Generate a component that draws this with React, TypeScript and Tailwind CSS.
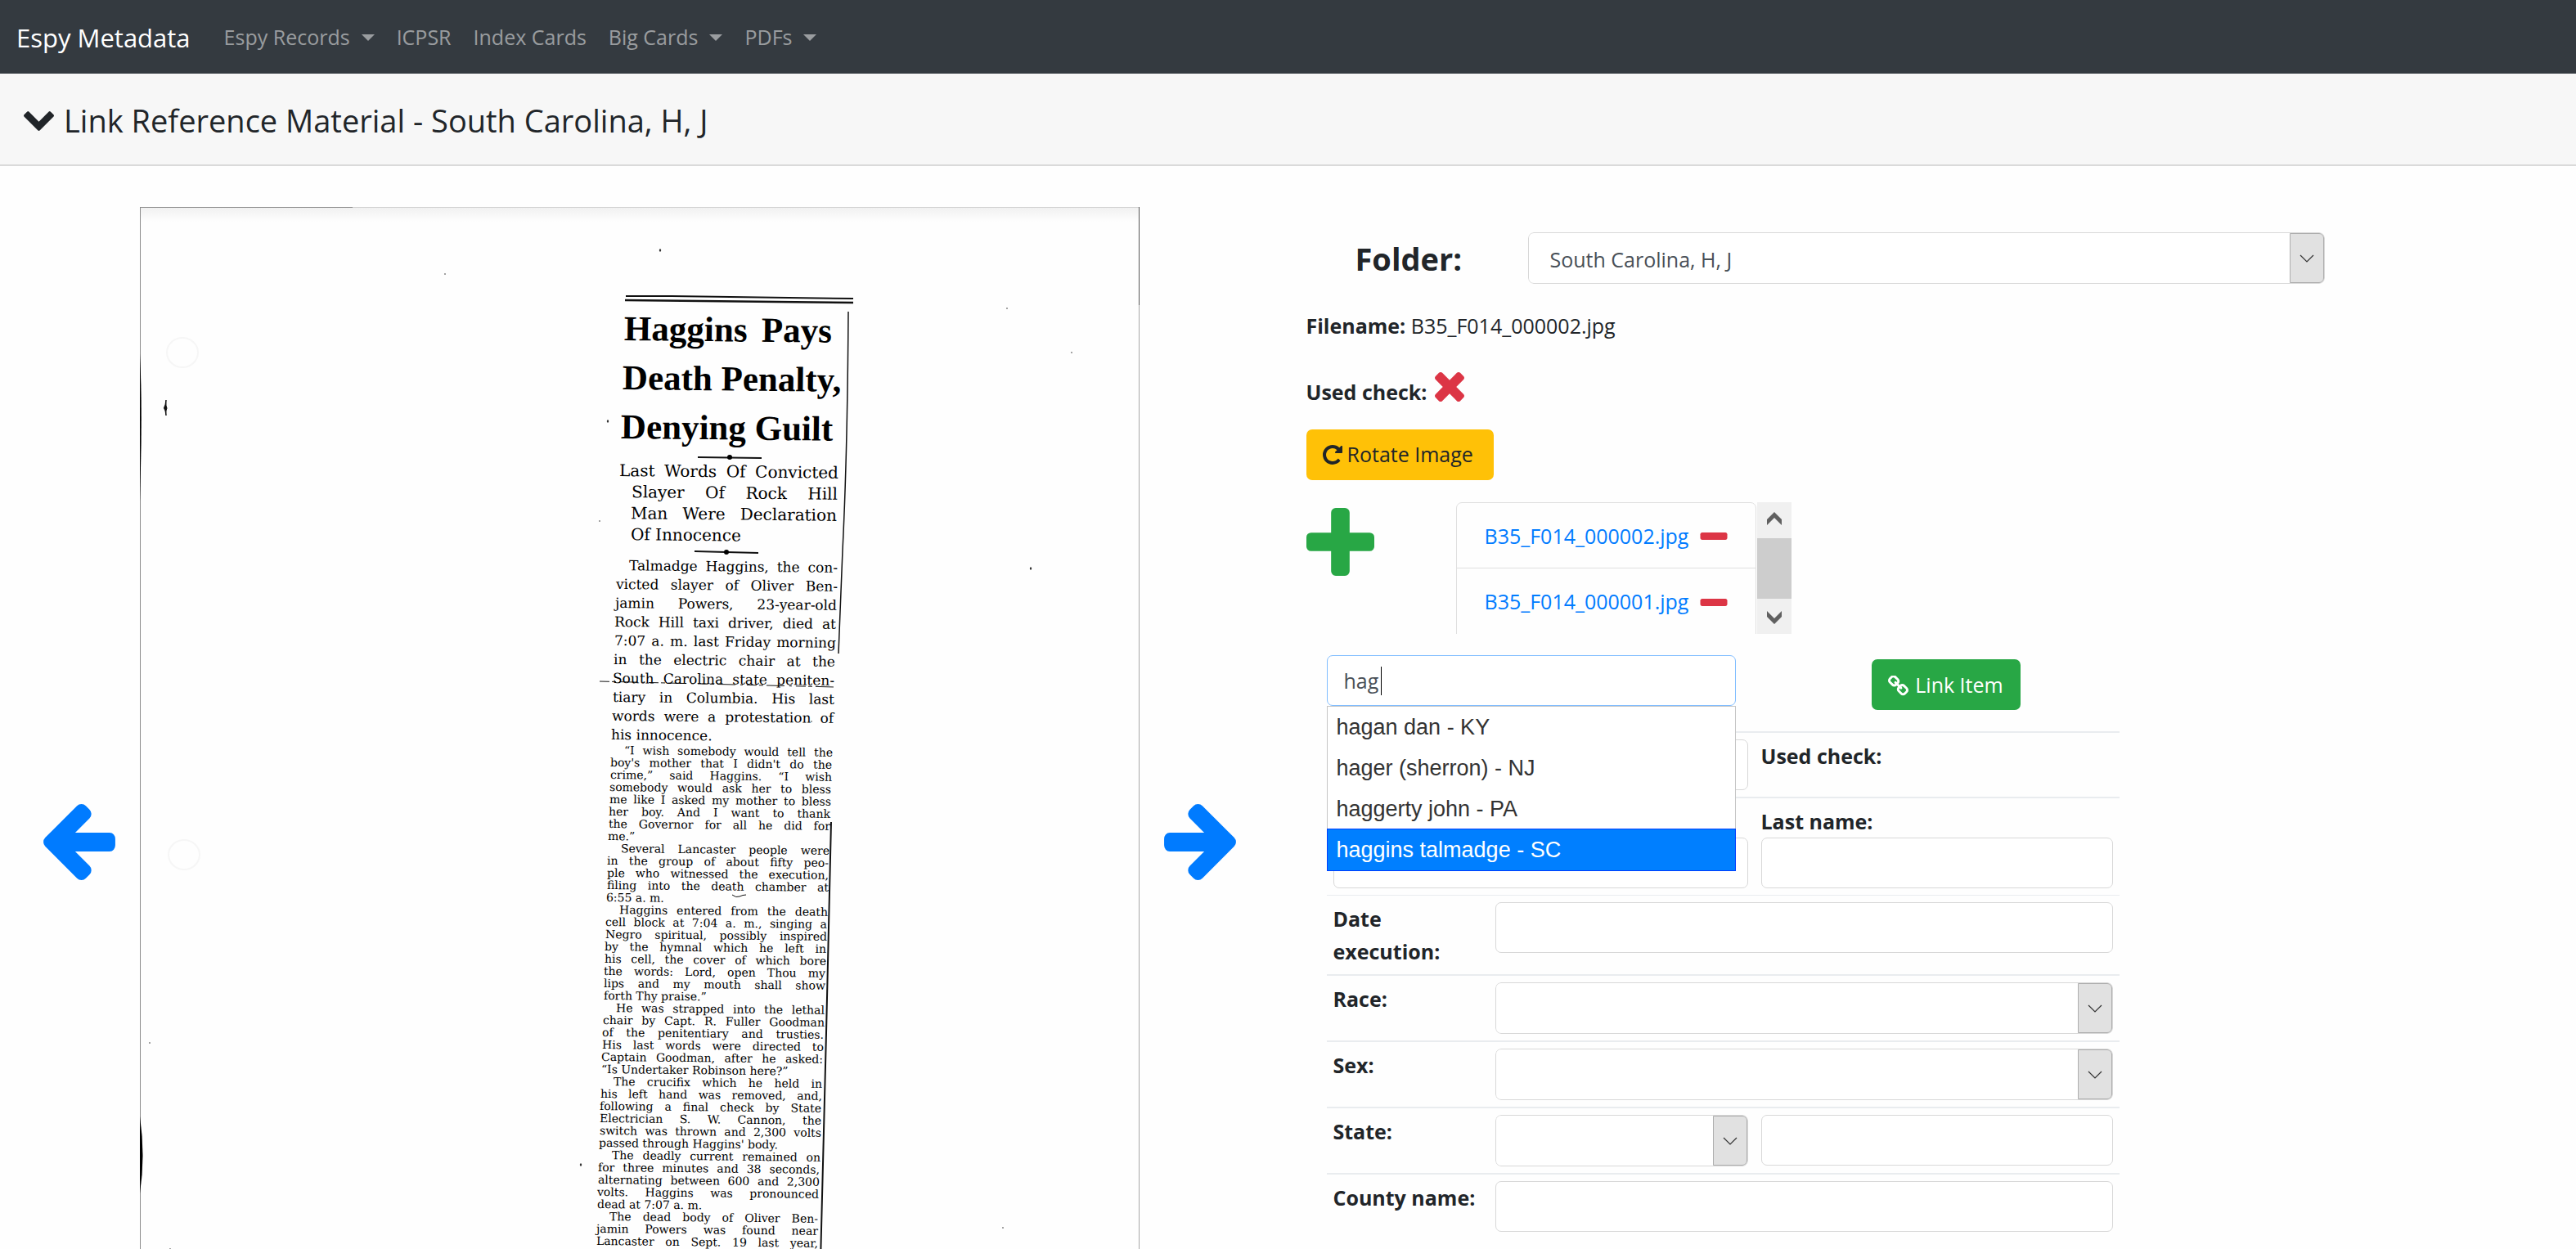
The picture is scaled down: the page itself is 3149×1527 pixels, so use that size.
import { useState } from "react";
import type { ReactNode } from "react";

/* ---------- icons ---------- */

const ICONS = {
  chevron: {
    box: "90 533 1612 1035",
    d: "M1683 808l-742 741q-19 19-45 19t-45-19l-742-741q-19-19-19-45.5t19-45.5l166-165q19-19 45-19t45 19l531 531 531-531q19-19 45-19t45 19l166 165q19 19 19 45.5t-19 45.5z",
  },
  plus: {
    box: "192 128 1408 1408",
    d: "M1600 736v192q0 40-28 68t-68 28h-416v416q0 40-28 68t-68 28h-192q-40 0-68-28t-28-68v-416h-416q-40 0-68-28t-28-68v-192q0-40 28-68t68-28h416v-416q0-40 28-68t68-28h192q40 0 68 28t28 68v416h416q40 0 68 28t28 68z",
  },
  minus: {
    box: "192 640 1408 384",
    d: "M1600 736v192q0 40-28 68t-68 28h-1216q-40 0-68-28t-28-68v-192q0-40 28-68t68-28h1216q40 0 68 28t28 68z",
  },
  times: {
    box: "302 366 1188 1188",
    d: "M1490 1322q0 40-28 68l-136 136q-28 28-68 28t-68-28l-294-294-294 294q-28 28-68 28t-68-28l-136-136q-28-28-28-68t28-68l294-294-294-294q-28-28-28-68t28-68l136-136q28-28 68-28t68 28l294 294 294-294q28-28 68-28t68 28l136 136q28 28 28 68t-28 68l-294 294 294 294q28 28 28 68z",
  },
  arrow: {
    box: "192 181 1472 1558",
    d: "M1664 896v128q0 53-32.5 90.5t-84.5 37.5h-704l293 294q38 36 38 90t-38 90l-75 76q-37 37-90 37-52 0-91-37l-651-652q-37-37-37-90 0-52 37-91l651-650q38-38 91-38 52 0 90 38l75 74q38 38 38 91t-38 91l-293 293h704q52 0 84.5 37.5t32.5 90.5z",
  },
  repeat: {
    box: "128 128 1536 1536",
    d: "M1664 256v448q0 26-19 45t-45 19h-448q-42 0-59-40-17-39 14-69l138-138q-148-137-349-137-104 0-198.5 40.5t-163.5 109.5-109.5 163.5-40.5 198.5 40.5 198.5 109.5 163.5 163.5 109.5 198.5 40.5q119 0 225-52t179-147q7-10 23-12 15 0 25 9l137 138q9 8 9.5 20.5t-7.5 22.5q-109 132-264 204.5t-327 72.5q-156 0-298-61t-245-164-164-245-61-298 61-298 164-245 245-164 298-61q147 0 284.5 55.5t244.5 156.5l130-129q29-31 70-14 39 17 39 59z",
  },
  chain: {
    box: "80 64 1632 1632",
    d: "M1520 1216q0-40-28-68l-208-208q-28-28-68-28-42 0-72 32 3 3 19 18.5t21.5 21.5 15 19 13 25.5 3.5 27.5q0 40-28 68t-68 28q-15 0-27.5-3.5t-25.5-13-19-15-21.5-21.5-18.5-19q-33 31-33 73 0 40 28 68l206 207q27 27 68 27 40 0 68-26l147-146q28-28 28-67zm-703-705q0-40-28-68l-206-207q-28-28-68-28-39 0-68 27l-147 146q-28 28-28 67 0 40 28 68l208 208q27 27 68 27 42 0 72-31-3-3-19-18.5t-21.5-21.5-15-19-13-25.5-3.5-27.5q0-40 28-68t68-28q15 0 27.5 3.5t25.5 13 19 15 21.5 21.5 18.5 19q33-31 33-73zm895 705q0 120-85 203l-147 146q-83 83-203 83-121 0-204-85l-206-207q-83-83-83-203 0-123 88-209l-88-88q-86 88-208 88-120 0-204-84l-208-208q-84-84-84-204t85-203l147-146q83-83 203-83 121 0 204 85l206 207q83 83 83 203 0 123-88 209l88 88q86-88 208-88 120 0 204 84l208 208q84 84 84 204z",
  },
};

function Icon({ name, className }: { name: keyof typeof ICONS; className: string }) {
  return (
    <svg viewBox={ICONS[name].box} fill="currentColor" aria-hidden="true" className={`shrink-0 ${className}`}>
      <path d={ICONS[name].d} />
    </svg>
  );
}

/* ---------- top bars ---------- */

function NavLink({ children, menu }: { children: ReactNode; menu?: boolean }) {
  return (
    <a href="#" className="flex items-center gap-3.5 text-[25px] text-white/50">
      {children}
      {menu && (
        <svg viewBox="0 0 16 8" className="h-2 w-4" fill="currentColor" aria-hidden="true">
          <path d="M0 0h16L8 8z" />
        </svg>
      )}
    </a>
  );
}

function NavBar() {
  return (
    <nav className="flex h-[90px] shrink-0 items-center gap-[27px] bg-[#343a40] px-5 pt-0.5">
      <a href="#" className="mr-3.5 text-[31px] text-white">Espy Metadata</a>
      <NavLink menu>Espy Records</NavLink>
      <NavLink>ICPSR</NavLink>
      <NavLink>Index Cards</NavLink>
      <NavLink menu>Big Cards</NavLink>
      <NavLink menu>PDFs</NavLink>
    </nav>
  );
}

/* ---------- scanned clipping ---------- */

type Block = { start: number; step: number; kind: "head" | "sub" | "lead" | "body"; lines: string[] };

const CLIPPING: Block[] = [
  { start: 370, step: 60, kind: "head", lines: ["Haggins Pays", "Death Penalty,", "Denying Guilt"] },
  { start: 562, step: 26, kind: "sub", lines: ["Last Words Of Convicted", ">Slayer Of Rock Hill", ">Man Were Declaration", ">|Of Innocence"] },
  {
    start: 680, step: 23, kind: "lead",
    lines: [
      ">Talmadge Haggins, the con-", "victed slayer of Oliver Ben-", "jamin Powers, 23-year-old",
      "Rock Hill taxi driver, died at", "7:07 a. m. last Friday morning", "in the electric chair at the",
      "South Carolina state peniten-", "tiary in Columbia. His last", "words were a protestation of", "|his innocence.",
    ],
  },
  {
    start: 910, step: 15, kind: "body",
    lines: [
      ">“I wish somebody would tell the", "boy's mother that I didn't do the", "crime,” said Haggins. “I wish",
      "somebody would ask her to bless", "me like I asked my mother to bless", "her boy. And I want to thank",
      "the Governor for all he did for", "|me.”",
      ">Several Lancaster people were", "in the group of about fifty peo-", "ple who witnessed the execution,",
      "filing into the death chamber at", "|6:55 a. m.",
      ">Haggins entered from the death", "cell block at 7:04 a. m., singing a", "Negro spiritual, possibly inspired",
      "by the hymnal which he left in", "his cell, the cover of which bore", "the words: Lord, open Thou my",
      "lips and my mouth shall show", "|forth Thy praise.”",
      ">He was strapped into the lethal", "chair by Capt. R. Fuller Goodman", "of the penitentiary and trusties.",
      "His last words were directed to", "Captain Goodman, after he asked:", "|“Is Undertaker Robinson here?”",
      ">The crucifix which he held in", "his left hand was removed, and,", "following a final check by State",
      "Electrician S. W. Cannon, the", "switch was thrown and 2,300 volts", "|passed through Haggins' body.",
      ">The deadly current remained on", "for three minutes and 38 seconds,", "alternating between 600 and 2,300",
      "volts. Haggins was pronounced", "|dead at 7:07 a. m.",
      ">The dead body of Oliver Ben-", "jamin Powers was found near", "Lancaster on Sept. 19 last year,",
    ],
  },
];

const KIND = {
  head: "w-[254px] text-[43px] leading-[60px] font-bold [font-family:'Liberation_Serif',serif]",
  sub: "w-[268px] text-[20px] leading-[26px] [font-family:'DejaVu_Serif',serif]",
  lead: "w-[271px] text-[17px] leading-[23px] [font-family:'DejaVu_Serif',serif]",
  body: "w-[271px] text-[14px] leading-[15px] [font-family:'DejaVu_Serif',serif]",
};

const GAP = { head: "", sub: "mt-2.5", lead: "mt-3.5", body: "" };

/* The column leans to the left on its way down the page. */
const lean = (y: number) => Math.round((1527 - y) * 0.03);

function Clipping() {
  return (
    <article className="w-[304px] text-black">
      {CLIPPING.map((block) => (
        <div key={block.kind} className={GAP[block.kind]}>
          {block.lines.map((raw, i) => {
            const indent = raw.startsWith(">");
            const loose = raw.includes("|");
            return (
              <p
                key={i}
                className={`origin-left rotate-[0.6deg] whitespace-nowrap ${KIND[block.kind]} ${
                  indent ? "pl-4" : ""
                } ${loose ? "text-left" : "text-justify [text-align-last:justify]"}`}
                style={{ marginLeft: lean(block.start + i * block.step) }}
              >
                {raw.replace(/[>|]/g, "")}
              </p>
            );
          })}
        </div>
      ))}
    </article>
  );
}

const SPECKS = [
  [636, 53, 2], [373, 82, 1], [1089, 442, 2], [1139, 178, 1], [1060, 124, 1], [572, 262, 2], [539, 1171, 2],
  [1055, 1248, 1], [12, 1022, 1], [562, 384, 1], [821, 629, 1], [764, 164, 1], [37, 1274, 1],
];

function ScanMarks() {
  return (
    <svg className="absolute inset-0 h-full w-full" aria-hidden="true">
      <defs>
        <linearGradient id="topShade" x1="0" y1="0" x2="0" y2="1">
          <stop offset="0" stopColor="#f0f0f0" />
          <stop offset="1" stopColor="#fefefe" />
        </linearGradient>
      </defs>
      <rect width="100%" height="18" fill="url(#topShade)" />
      <path d="M0 0.5H260" stroke="#8a8a8a" strokeWidth="1" />
      <path d="M260 0.5H1222" stroke="#d0d0d0" strokeWidth="1" />
      <path d="M0.5 0V1290" stroke="#8c8c8c" strokeWidth="1" />
      <path d="M1221.5 0V120" stroke="#555" strokeWidth="1" />
      <path d="M1221.5 120V1290" stroke="#a8a8a8" strokeWidth="1" />
      <path d="M0 180Q3 240 1 320L0 360z" fill="#000" />
      <path d="M0 1112Q7 1160 0 1206z" fill="#000" />
      <g fill="none" stroke="#f6f6f6" strokeWidth="2">
        <ellipse cx="52" cy="178" rx="19" ry="18" />
        <ellipse cx="54" cy="792" rx="19" ry="18" />
      </g>
      <path d="M32 236v7q2 3 0 6v6l-1-6q-3-3 0-7z" fill="#111" stroke="#111" strokeWidth="1" />
      <g fill="#333">
        {SPECKS.map(([x, y, r], i) => (
          <ellipse key={i} cx={x} cy={y} rx={r * 0.6} ry={r * 0.9} />
        ))}
      </g>
      <g fill="none" stroke="#111">
        <path d="M594 109L650 109 872 112" strokeWidth="2" />
        <path d="M593 114L872 117" strokeWidth="2.4" />
        <path d="M866 128Q865 300 859 420L854 546" strokeWidth="1.5" />
        <path d="M845 752L839 1010 832 1290" strokeWidth="2" />
        <path d="M682 306L760 307" strokeWidth="2" />
        <path d="M678 421L756 423" strokeWidth="2" />
        <path d="M562 580L850 587" strokeWidth="1" strokeDasharray="12 3 5 4 22 6 3 5" />
        <path d="M724 841q5 4 9 2t8-2" strokeWidth="1" />
      </g>
      <circle cx="721" cy="306" r="3" />
      <circle cx="717" cy="422" r="3" />
    </svg>
  );
}

function Scan() {
  return (
    <figure className="relative w-[1222px] shrink-0 overflow-hidden bg-[#fefefe]">
      <ScanMarks />
      <div className="relative ml-[557px] pt-[119px]">
        <Clipping />
      </div>
    </figure>
  );
}

function ArrowButton({ label, flip }: { label: string; flip?: boolean }) {
  return (
    <button type="button" aria-label={label} className="mt-[730px] self-start text-[#007bff]">
      <Icon name="arrow" className={flip ? "h-[93px] w-[88px] -scale-x-100" : "h-[93px] w-[88px]"} />
    </button>
  );
}

/* ---------- form controls ---------- */

const FIELD = "h-[62px] w-full rounded-[7px] border border-[#d8d8d8] bg-white px-5 text-[25px] text-[#495057] outline-none";

function Field({ id, label }: { id: string; label?: string }) {
  return <input id={id} type="text" aria-label={label} className={`block ${FIELD}`} />;
}

function Select({ id, label, options }: { id: string; label?: string; options: string[] }) {
  return (
    <div className="relative h-[63px] w-full overflow-hidden rounded-[7px]">
      <select
        id={id}
        aria-label={label}
        className="h-full w-full appearance-none rounded-[7px] border border-[#d8d8d8] bg-white pt-1 pr-12 pl-[26px] text-[25px] text-[#495057] outline-none"
      >
        {options.map((o) => (
          <option key={o}>{o}</option>
        ))}
      </select>
      <span className="pointer-events-none absolute inset-y-px right-px flex w-[42px] items-center justify-center rounded-r-[6px] border border-[#adadad] bg-[#e1e1e1]">
        <svg viewBox="0 0 18 10" className="h-2.5 w-[18px]" fill="none" stroke="#333" strokeWidth="1.2" aria-hidden="true">
          <path d="M1 1l8 8 8-8" />
        </svg>
      </span>
    </div>
  );
}

function Row({ children, thin }: { children: ReactNode; thin?: boolean }) {
  return (
    <div
      className={`grid grid-cols-[198px_325px_446px] border-[#e9ecef] ${
        thin ? "border-t" : "border-t-2"
      }`}
    >
      {children}
    </div>
  );
}

function RowLabel({ htmlFor, children }: { htmlFor: string; children: ReactNode }) {
  return (
    <label htmlFor={htmlFor} className="px-2 pt-2 text-[25px] leading-10 font-bold">
      {children}
    </label>
  );
}

const MATCHES = ["hagan dan - KY", "hager (sherron) - NJ", "haggerty john - PA", "haggins talmadge - SC"];

function SearchBox() {
  const [query, setQuery] = useState("hag");
  return (
    <div className="relative w-[500px]">
      <input
        type="text"
        aria-label="Search records"
        value={query}
        onChange={(e) => setQuery(e.target.value)}
        className="block h-[62px] w-full rounded-[7px] border border-[#80bdff] bg-white px-5 text-[25px] text-[#495057] caret-transparent outline-none"
      />
      <span className="absolute top-3.5 left-[66px] h-[35px] w-px bg-black" />
      <ul className="absolute top-full left-0 z-10 w-full border border-[#c5c5c5] bg-white [font-family:'Liberation_Sans',sans-serif]">
        {MATCHES.map((m, i) => (
          <li key={m}>
            <button
              type="button"
              className={
                i === MATCHES.length - 1
                  ? "-m-px block h-[52px] w-[500px] border border-[#003eff] bg-[#007fff] px-[11px] text-left text-[27px] text-white"
                  : "block h-[50px] w-full px-[11px] text-left text-[27px] text-[#333]"
              }
            >
              {m}
            </button>
          </li>
        ))}
      </ul>
    </div>
  );
}

function LinkedFiles() {
  return (
    <div className="flex h-[161px] w-[410px] overflow-hidden">
      <ul className="h-[200px] w-[367px] rounded-[7px] border border-[#dfdfdf]">
        {["B35_F014_000002.jpg", "B35_F014_000001.jpg"].map((name) => (
          <li
            key={name}
            className="flex h-20 items-center gap-3 border-b border-[#dfdfdf] pt-0.5 pl-[34px] text-[25px] last:border-b-0"
          >
            <a href="#" className="w-[251px] whitespace-nowrap text-[#007bff]">{name}</a>
            <button type="button" aria-label={`Remove ${name}`} className="text-[#dc3545]">
              <Icon name="minus" className="h-[9px] w-[34px]" />
            </button>
          </li>
        ))}
      </ul>
      <div className="ml-px flex w-[42px] flex-col items-center justify-between bg-[#f0f0f0] py-3 text-[#606060]">
        <svg viewBox="0 0 18 16" className="h-4 w-[18px]" fill="currentColor" aria-hidden="true">
          <path d="M9 0l9 9v7L9 7l-9 9V9z" />
        </svg>
        <span className="h-[74px] w-[42px] bg-[#cdcdcd]" />
        <svg viewBox="0 0 18 16" className="h-4 w-[18px]" fill="currentColor" aria-hidden="true">
          <path d="M9 16l9-9V0L9 9 0 0v7z" />
        </svg>
      </div>
    </div>
  );
}

function RecordForm() {
  return (
    <form className="ml-[25px] w-[969px]">
      <div className="flex h-[93px] items-start justify-between">
        <SearchBox />
        <button
          type="button"
          className="mt-[5px] mr-[121px] flex h-[62px] w-[182px] items-center justify-center gap-2 rounded-[7px] bg-[#28a745] pt-0.5 text-[25px] whitespace-nowrap text-white"
        >
          <Icon name="chain" className="size-[25px]" />
          Link Item
        </button>
      </div>
      <Row>
        <div className="col-start-2 p-2"><Field id="record" label="Record" /></div>
        <div className="px-2 pt-2 text-[25px] leading-10 font-bold">Used check:</div>
      </Row>
      <Row>
        <div className="col-span-2 px-2 pt-12 pb-2"><Field id="first" label="First name" /></div>
        <div className="px-2 pt-2 pb-2">
          <label htmlFor="last" className="block text-[25px] leading-10 font-bold">Last name:</label>
          <Field id="last" />
        </div>
      </Row>
      <Row thin>
        <RowLabel htmlFor="date">Date execution:</RowLabel>
        <div className="col-span-2 h-24 p-2"><Field id="date" /></div>
      </Row>
      <Row>
        <RowLabel htmlFor="race">Race:</RowLabel>
        <div className="col-span-2 p-2"><Select id="race" options={[""]} /></div>
      </Row>
      <Row>
        <RowLabel htmlFor="sex">Sex:</RowLabel>
        <div className="col-span-2 p-2"><Select id="sex" options={[""]} /></div>
      </Row>
      <Row>
        <RowLabel htmlFor="state">State:</RowLabel>
        <div className="p-2"><Select id="state" options={[""]} /></div>
        <div className="p-2"><Field id="stateName" label="State name" /></div>
      </Row>
      <Row>
        <RowLabel htmlFor="county">County name:</RowLabel>
        <div className="col-span-2 p-2"><Field id="county" /></div>
      </Row>
    </form>
  );
}

export default function App() {
  return (
    <div className="flex h-screen flex-col overflow-hidden bg-[#fefefe] text-[#212529] [font-family:'Open_Sans','Noto_Sans',sans-serif]">
      <NavBar />
      <header className="flex h-[113px] shrink-0 items-center gap-3 border-b-2 border-[#dadada] bg-[#f7f7f7] px-[29px] pt-1">
        <Icon name="chevron" className="h-6 w-[37px]" />
        <h1 className="text-[38px]">Link Reference Material - South Carolina, H, J</h1>
      </header>
      <main className="grid min-h-0 flex-1 grid-cols-2">
        <section className="flex min-h-0 justify-start gap-[30px] overflow-hidden pt-[50px] pl-[53px]">
          <ArrowButton label="Previous image" />
          <Scan />
          <ArrowButton label="Next image" flip />
        </section>
        <section className="pt-[81px] pl-[22px]">
          <div className="flex items-center pl-[60px]">
            <label htmlFor="folder" className="w-[211px] pt-0.5 text-[38px] font-bold">Folder:</label>
            <div className="w-[974px]">
              <Select id="folder" options={["South Carolina, H, J"]} />
            </div>
          </div>
          <p className="mt-[31px] text-[25px] leading-10">
            <strong>Filename:</strong> B35_F014_000002.jpg
          </p>
          <p className="mt-[37px] flex h-11 items-end gap-2.5 text-[25px] leading-10">
            <strong>Used check:</strong>
            <Icon name="times" className="mb-2 size-9 text-[#dc3545]" />
          </p>
          <button
            type="button"
            className="mt-[26px] flex h-[62px] w-[229px] items-center gap-1.5 rounded-[7px] bg-[#ffc107] pl-5 text-[25px] whitespace-nowrap"
          >
            <Icon name="repeat" className="size-6" />
            Rotate Image
          </button>
          <div className="mt-[27px] mb-[26px] flex items-start gap-[100px]">
            <button type="button" aria-label="Add file" className="mt-[7px] text-[#28a745]">
              <Icon name="plus" className="size-[83px]" />
            </button>
            <LinkedFiles />
          </div>
          <RecordForm />
        </section>
      </main>
    </div>
  );
}
